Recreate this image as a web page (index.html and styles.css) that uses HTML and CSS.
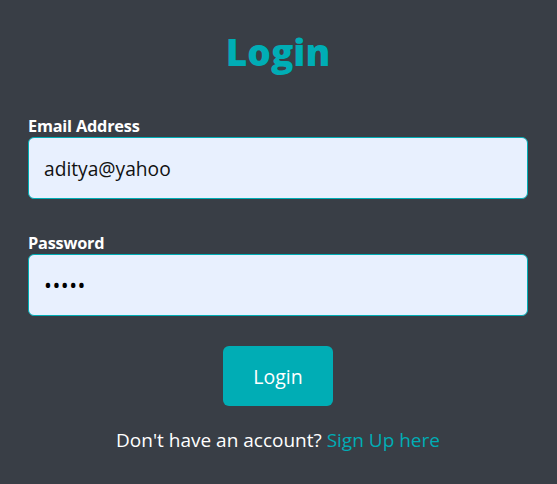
FILE: index.html
```html
<!DOCTYPE html>
<html>
<head>
<meta charset="utf-8">
<link rel="stylesheet" href="styles.css">
</head>
<body>
<div class="card">
  <h1 class="title">Login</h1>
  <form class="form">
    <label class="field">
      <span class="label">Email Address</span>
      <input class="input" type="text" value="aditya@yahoo">
    </label>
    <label class="field field-last">
      <span class="label">Password</span>
      <input class="input input-secret" type="password" value="12345">
    </label>
    <div class="actions">
      <button class="btn" type="button">Login</button>
    </div>
  </form>
  <p class="footer">Don't have an account? <a class="link" href="#">Sign Up here</a></p>
</div>
</body>
</html>
```

FILE: styles.css
```css
html, body {
  margin: 0;
  padding: 0;
  background: #393e46;
  height: 100%;
}
body {
  font-family: "Open Sans", "Noto Sans", sans-serif;
  color: #eeeeee;
}
.card {
  width: 500px;
  margin: 0 auto 0 28px;
  padding-top: 28px;
  display: flex;
  flex-direction: column;
}
.title {
  margin: 0;
  text-align: center;
  color: #00adb5;
  font-size: 37px;
  font-weight: 800;
  line-height: 48px;
}
.form {
  margin-top: 39px;
  display: flex;
  flex-direction: column;
}
.field {
  display: flex;
  flex-direction: column;
  margin-bottom: 33px;
}
.field-last {
  margin-bottom: 30px;
}
.label {
  font-size: 16.3px;
  font-weight: 700;
  line-height: 22px;
  color: #ffffff;
  letter-spacing: -0.2px;
}
.input {
  margin-top: 0;
  height: 62px;
  box-sizing: border-box;
  border: 1px solid #00adb5;
  border-radius: 6px;
  background: #e8f0fe;
  padding: 0 15px;
  font-family: inherit;
  font-size: 19.2px;
  color: #111;
  outline: none;
}
.input-secret {
  font-size: 21px;
  letter-spacing: 0.5px;
  color: #000;
}
.actions {
  display: flex;
  justify-content: center;
}
.btn {
  width: 110px;
  height: 60px;
  border: none;
  border-radius: 6px;
  background: #00adb5;
  color: #ffffff;
  font-family: inherit;
  font-size: 19.5px;
}
.footer {
  margin: 21px 0 0;
  text-align: center;
  font-size: 19px;
  line-height: 26px;
  color: #ffffff;
}
.link {
  color: #00adb5;
  text-decoration: none;
}
```
